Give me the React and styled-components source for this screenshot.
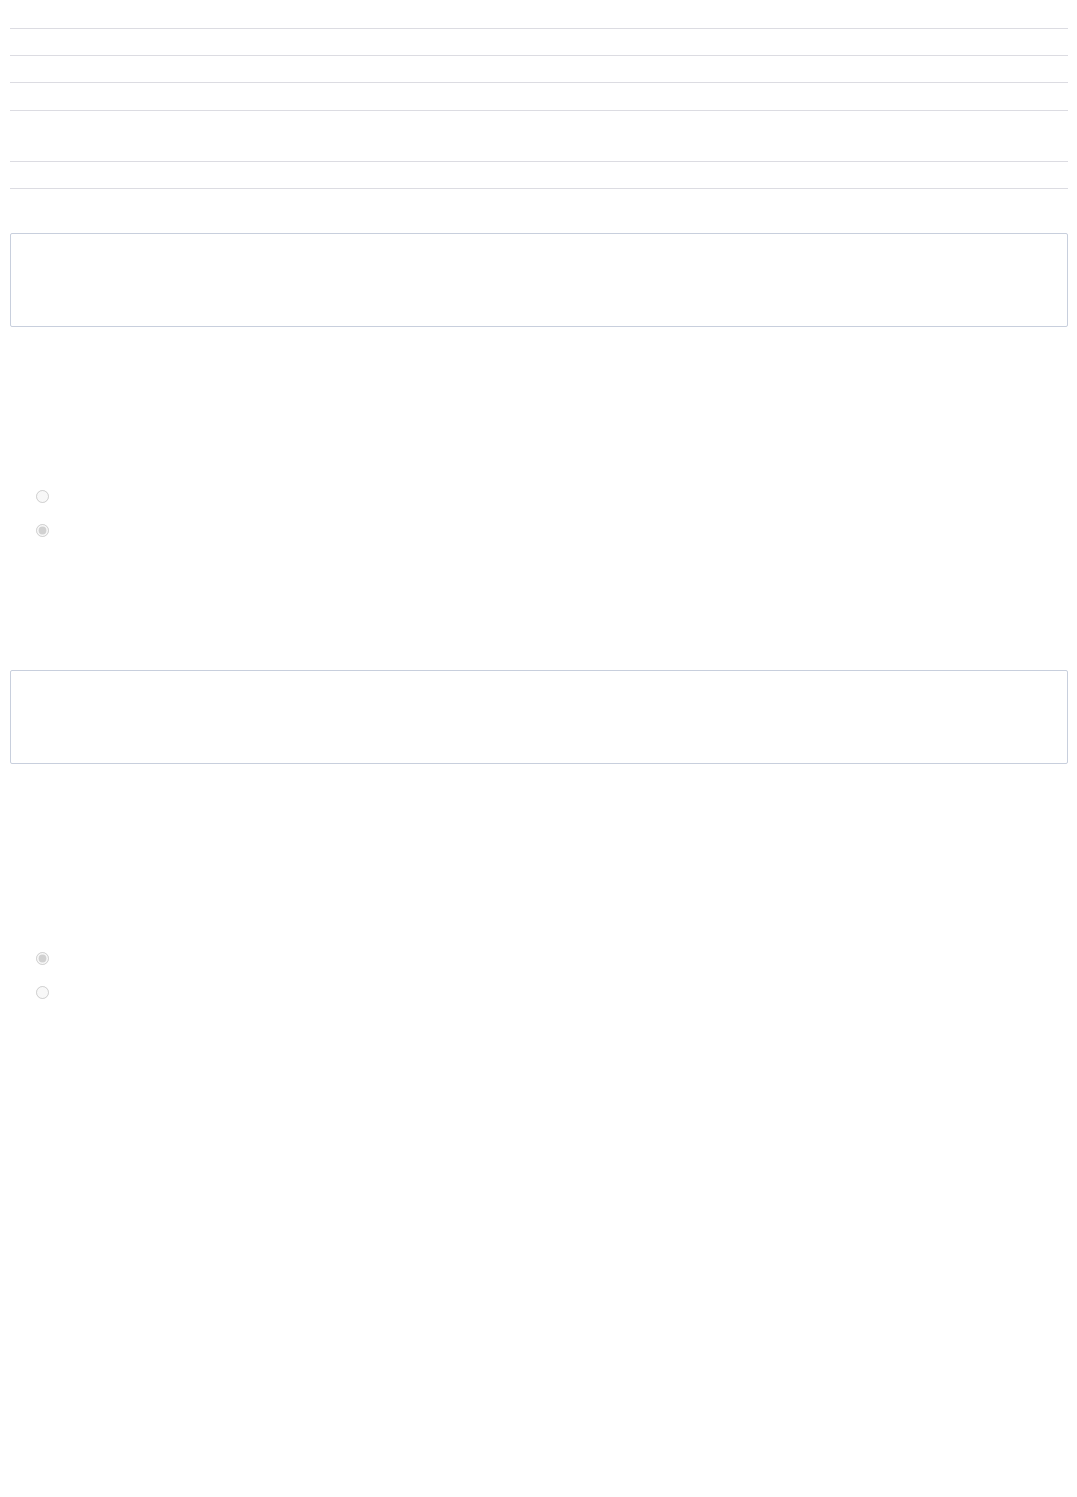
import React from "react";
import styled, { createGlobalStyle } from "styled-components";

const GlobalStyle = createGlobalStyle`
  html, body {
    margin: 0;
    padding: 0;
    background: #fff;
    font-family: "Liberation Sans", Arial, sans-serif;
  }
`;

const Page = styled.div`
  padding: 0 9px 0 10px;
  min-height: 1497px;
  box-sizing: border-box;
`;

const LineRow = styled.div`
  height: ${(p) => p.h}px;
  border-bottom: 1px solid #dcdce2;
`;

const TextBox = styled.div`
  height: 94px;
  box-sizing: border-box;
  border: 1px solid #c8cfdd;
  border-radius: 2px;
  margin-top: ${(p) => p.top}px;
`;

const RadioList = styled.div`
  display: flex;
  flex-direction: column;
  gap: 21px;
  padding-left: 26px;
  margin-top: ${(p) => p.top}px;
`;

const Radio = styled.input.attrs({ type: "radio", disabled: true })`
  width: 13px;
  height: 13px;
  margin: 0;
`;

const rows = [28, 26, 26, 27, 50, 26];

export default function App() {
  return (
    <>
      <GlobalStyle />
      <Page>
        {rows.map((h, i) => (
          <LineRow key={i} h={h} />
        ))}
        <TextBox top={44} />
        <RadioList top={163}>
          <Radio name="a" />
          <Radio name="a" defaultChecked />
        </RadioList>
        <TextBox top={133} />
        <RadioList top={188}>
          <Radio name="b" defaultChecked />
          <Radio name="b" />
        </RadioList>
      </Page>
    </>
  );
}
